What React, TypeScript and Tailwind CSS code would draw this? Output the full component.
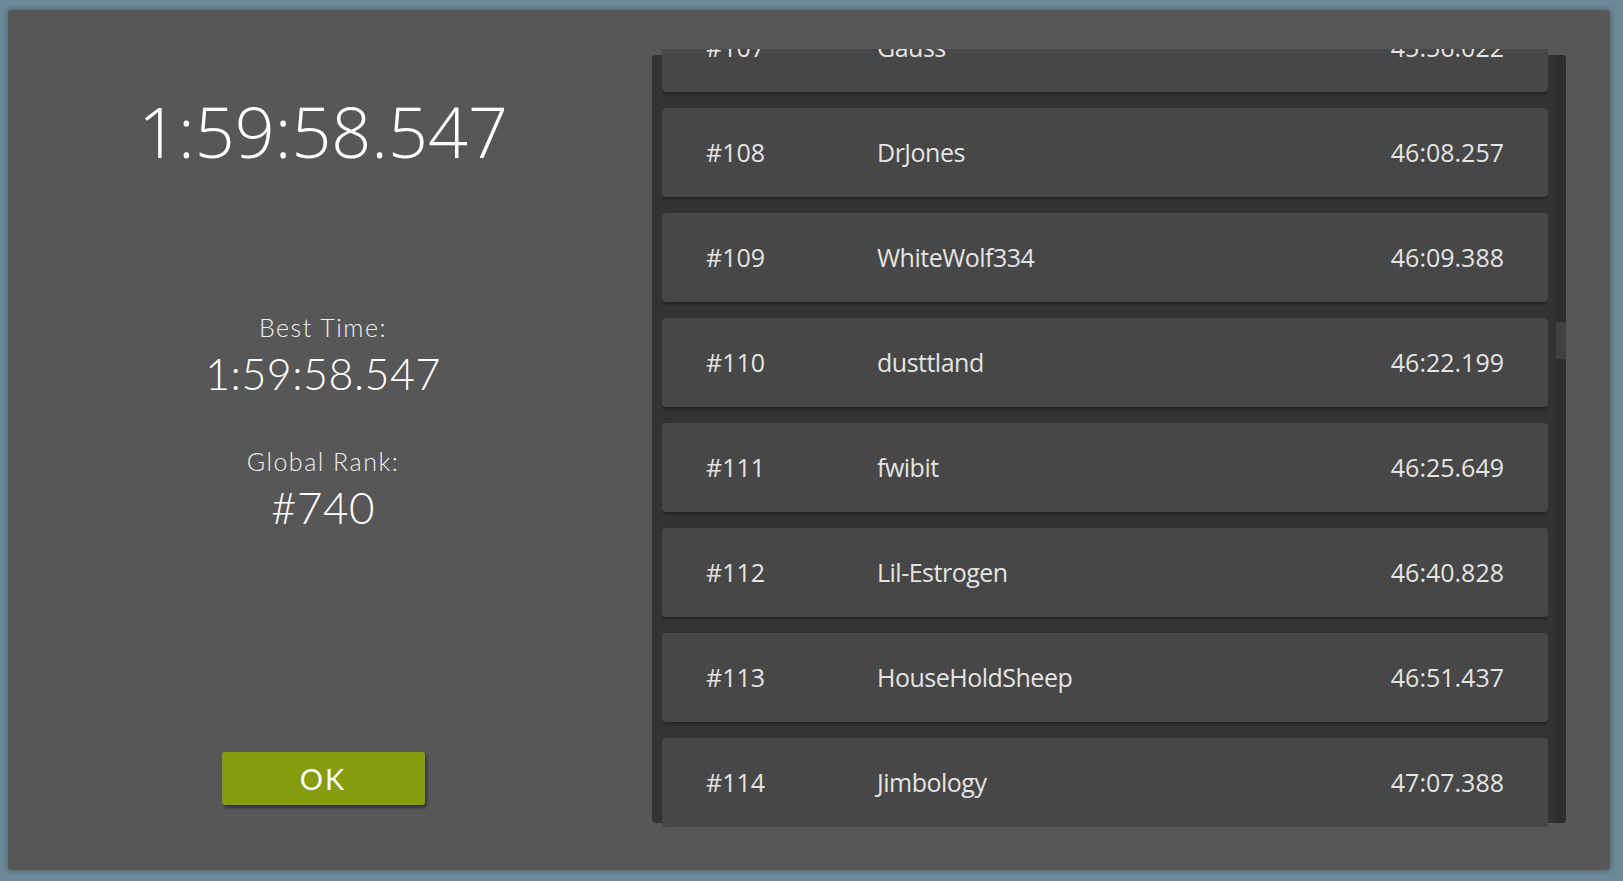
// Race results screen — personal time on the left, scrolled leaderboard on the right

const rows = [
  { rank: "#107", name: "Gauss", time: "45:56.022" },
  { rank: "#108", name: "DrJones", time: "46:08.257" },
  { rank: "#109", name: "WhiteWolf334", time: "46:09.388" },
  { rank: "#110", name: "dusttland", time: "46:22.199" },
  { rank: "#111", name: "fwibit", time: "46:25.649" },
  { rank: "#112", name: "Lil-Estrogen", time: "46:40.828" },
  { rank: "#113", name: "HouseHoldSheep", time: "46:51.437" },
  { rank: "#114", name: "Jimbology", time: "47:07.388" },
];

const openSans = "font-['Open_Sans',sans-serif]";
const lato = "font-['Lato',sans-serif]";

export default function App() {
  return (
    <div className="w-full h-[881px] bg-[#6d8896] pt-[10px] pl-[8px] pr-[13px] pb-[11px]">
      <div className="h-full flex bg-[#575757] rounded-[4px] shadow-[0_0_6px_rgba(0,0,0,0.35)]">

        {/* Left — your result */}
        <div className="w-[630px] flex flex-col items-center text-white">
          <div className={`${openSans} font-light text-[70px] leading-[70px] mt-[86px]`}>
            1:59:58.547
          </div>

          <div className={`${lato} font-light text-[25px] leading-[25px] tracking-[1.5px] mt-[149px] text-[#f0f0f0]`}>
            Best Time:
          </div>
          <div className={`${lato} font-light text-[43px] leading-[43px] tracking-[0.5px] mt-[12px]`}>
            1:59:58.547
          </div>

          <div className={`${lato} font-light text-[25px] leading-[25px] tracking-[1.5px] mt-[54px] text-[#f0f0f0]`}>
            Global Rank:
          </div>
          <div className={`${lato} font-light text-[44px] leading-[44px] tracking-[0.5px] mt-[11px]`}>
            #740
          </div>

          <button
            className={`${lato} mt-auto mb-[65px] w-[203px] h-[53px] rounded-[3px] bg-[#879b0f] text-white text-[29px] tracking-[2px] shadow-[2px_3px_3px_rgba(0,0,0,0.4)]`}
          >
            OK
          </button>
        </div>

        {/* Right — leaderboard */}
        <div className="pl-[14px]">
          <div className="mt-[45px] w-[914px] h-[768px] flex bg-[#333333] rounded-[4px]">
            <div className="ml-[10px] -mt-[6px] w-[886px] h-[778px] overflow-hidden">
              <div className="-mt-[46px] flex flex-col gap-[16px]">
                {rows.map((row) => (
                  <div
                    key={row.rank}
                    className={`${openSans} h-[89px] shrink-0 flex items-center pl-[44px] pr-[44px] bg-[#474747] rounded-[4px] shadow-[0_2px_3px_rgba(0,0,0,0.35)] text-[25px] text-[#e4e4e4]`}
                  >
                    <span className="w-[171px]">{row.rank}</span>
                    <span className="tracking-[-0.5px]">{row.name}</span>
                    <span className="ml-auto">{row.time}</span>
                  </div>
                ))}
              </div>
            </div>
            {/* Scrollbar */}
            <div className="ml-auto w-[10px] bg-[#2e2e2e] rounded-r-[4px]">
              <div className="mt-[267px] h-[37px] bg-[#414141]" />
            </div>
          </div>
        </div>

      </div>
    </div>
  );
}
